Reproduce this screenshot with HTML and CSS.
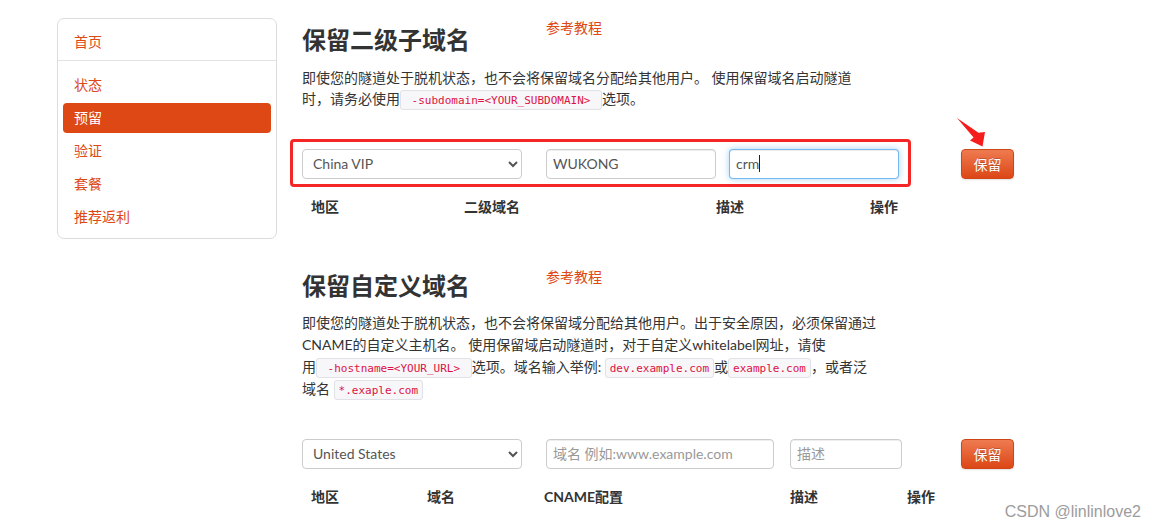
FILE: index.html
```html
<!DOCTYPE html>
<html lang="zh-CN">
<head>
<meta charset="utf-8">
<title>保留域名</title>
<link rel="stylesheet" href="styles.css">
</head>
<body>
<div class="page">
  <aside class="sidebar">
    <ul class="nav">
      <li><a class="nav-link" href="#">首页</a></li>
      <li class="nav-divider"></li>
      <li><a class="nav-link" href="#">状态</a></li>
      <li><a class="nav-link active" href="#">预留</a></li>
      <li><a class="nav-link" href="#">验证</a></li>
      <li><a class="nav-link" href="#">套餐</a></li>
      <li><a class="nav-link" href="#">推荐返利</a></li>
    </ul>
  </aside>

  <main class="main">
    <section class="section">
      <div class="title-row">
        <h2 class="title">保留二级子域名</h2>
        <a class="tutorial" href="#">参考教程</a>
      </div>
      <p class="desc desc-1">即使您的隧道处于脱机状态，也不会将保留域名分配给其他用户。 使用保留域名启动隧道<br>时，请务必使用<code class="code code-wide">-subdomain=&lt;YOUR_SUBDOMAIN&gt;</code>选项。</p>
      <div class="form-row form-row-1">
        <div class="annot-box"></div>
        <select class="control select">
          <option>China VIP</option>
        </select>
        <input class="control input in-sub" type="text" value="WUKONG">
        <div class="focus-wrap">
          <input class="control input in-desc focused" type="text" value="crm">
          <span class="caret"></span>
        </div>
        <button class="btn">保留</button>
      </div>
      <div class="labels labels-1">
        <span>地区</span><span>二级域名</span><span>描述</span><span>操作</span>
      </div>
    </section>

    <section class="section section-2">
      <div class="title-row">
        <h2 class="title title-2">保留自定义域名</h2>
        <a class="tutorial" href="#">参考教程</a>
      </div>
      <p class="desc desc-2">即使您的隧道处于脱机状态，也不会将保留域分配给其他用户。出于安全原因，必须保留通过<br>CNAME的自定义主机名。 使用保留域启动隧道时，对于自定义whitelabel网址，请使<br>用<code class="code code-wide">-hostname=&lt;YOUR_URL&gt;</code>选项。域名输入举例: <code class="code">dev.example.com</code>或<code class="code">example.com</code>，或者泛<br>域名 <code class="code">*.exaple.com</code></p>
      <div class="form-row form-row-2">
        <select class="control select">
          <option>United States</option>
        </select>
        <input class="control input in-domain" type="text" placeholder="域名 例如:www.example.com">
        <input class="control input in-desc2" type="text" placeholder="描述">
        <button class="btn btn-2">保留</button>
      </div>
      <div class="labels labels-2">
        <span>地区</span><span>域名</span><span>CNAME配置</span><span>描述</span><span>操作</span>
      </div>
    </section>
  </main>
</div>

<svg class="arrow" width="45" height="45" viewBox="0 0 45 45" aria-hidden="true">
  <polygon points="7,8 28.5,22.8 35,22 32.5,36.5 20,30.5 23.6,27.6" fill="#f41c1c"/>
</svg>

<div class="watermark">CSDN @linlinlove2</div>
</body>
</html>
```

FILE: styles.css
```css
* { box-sizing: border-box; }

html, body {
  margin: 0;
  padding: 0;
  background: #fff;
}

body {
  font-family: "Lato", "Noto Sans CJK SC", sans-serif;
  font-size: 14px;
  color: #333;
}

.page {
  display: flex;
  align-items: flex-start;
  gap: 25px;
  padding: 18px 0 0 57px;
}

/* sidebar */
.sidebar {
  width: 220px;
  flex: none;
  border: 1px solid #dcdcdc;
  border-radius: 7px;
  padding: 8px 5px 6px;
}

.nav {
  list-style: none;
  margin: 0;
  padding: 0;
}

.nav-link {
  display: block;
  padding: 5px 11px;
  line-height: 20px;
  height: 30px;
  margin-bottom: 3px;
  color: #dd4814;
  text-decoration: none;
  border-radius: 4px;
}

.nav li:last-child .nav-link { margin-bottom: 0; }

.nav-link.active {
  background: #dd4814;
  color: #fff;
}

.nav-divider {
  height: 1px;
  background: #e3e3e3;
  margin: 1px -5px 9px;
}

/* main */
.main {
  width: 760px;
  flex: none;
}

.title-row {
  display: flex;
  align-items: flex-start;
}

.title {
  width: 244px;
  margin: 8px 0 0;
  font-size: 24px;
  line-height: 28.8px;
  font-weight: 700;
  color: #333;
}

.title-2 { margin-top: 5px; }

.tutorial {
  line-height: 20px;
  color: #dd4814;
  text-decoration: none;
}

.desc {
  margin: 12px 0 0;
  line-height: 21px;
  color: #333;
  white-space: nowrap;
}

.desc-2 {
  margin-top: 11px;
  line-height: 22px;
}

.code {
  font-family: "DejaVu Sans Mono", "Liberation Mono", monospace;
  font-size: 11px;
  line-height: 1;
  color: #dd1144;
  background: #f7f7f9;
  border: 1px solid #e1e1e8;
  border-radius: 3px;
  padding: 3px 4px 2px;
}

.code-wide { padding: 3px 10.6px 2px; }

/* forms */
.form-row {
  position: relative;
  display: flex;
  align-items: center;
  height: 30px;
}

.form-row-1 { margin-top: 40px; }
.form-row-2 { margin-top: 39px; }

.annot-box {
  position: absolute;
  left: -12px;
  top: -10px;
  width: 621px;
  height: 48px;
  border: 3px solid #f52626;
  border-radius: 4px;
  pointer-events: none;
}

.control {
  height: 30px;
  font-family: "Lato", "Noto Sans CJK SC", sans-serif;
  font-size: 14px;
  color: #555;
  background: #fff;
  border: 1px solid #cccccc;
  border-radius: 4px;
  box-shadow: inset 0 1px 1px rgba(0, 0, 0, 0.075);
  outline: none;
}

.select {
  width: 220px;
  padding: 4px 6px;
  margin-right: 24px;
  box-shadow: none;
}

.input {
  padding: 4px 6px;
}

.input::placeholder { color: #999; }

.in-sub { width: 170px; margin-right: 13px; }

.focus-wrap {
  position: relative;
  margin-right: 62px;
}

.in-desc { width: 170px; display: block; }

.focused {
  border-color: rgba(82, 168, 236, 0.8);
  box-shadow: inset 0 1px 1px rgba(0, 0, 0, 0.075), 0 0 6px rgba(82, 168, 236, 0.5);
}

.caret {
  position: absolute;
  left: 30px;
  top: 6px;
  width: 1px;
  height: 17px;
  background: #222;
}

.in-domain { width: 228px; margin-right: 16px; }
.in-desc2 { width: 112px; margin-right: 59px; }

.btn {
  width: 53px;
  height: 30px;
  padding: 0;
  font-family: "Lato", "Noto Sans CJK SC", sans-serif;
  font-size: 14px;
  color: #fff;
  background: linear-gradient(to bottom, #ef7b51, #dc4716);
  border: 1px solid #cf4616;
  border-radius: 4px;
  text-shadow: 0 -1px 0 rgba(0, 0, 0, 0.2);
  box-shadow: 0 1px 2px rgba(0, 0, 0, 0.12);
}

/* labels */
.labels {
  display: grid;
  margin-top: 18px;
  line-height: 20px;
  font-weight: 700;
  color: #333;
}

.labels span { padding-left: 9px; }

.labels-1 { grid-template-columns: 153px 252px 154px auto; }
.labels-2 { grid-template-columns: 116px 117px 246px 117px auto; }

.section-2 { margin-top: 50px; }

/* annotation & watermark overlays */
.arrow {
  position: absolute;
  left: 950px;
  top: 110px;
}

.watermark {
  position: absolute;
  right: 16px;
  top: 502px;
  font-family: "Liberation Sans", Arial, sans-serif;
  font-size: 16px;
  line-height: 20px;
  color: #9c9c9c;
  text-shadow: 0 0 1px #fff;
}
```
